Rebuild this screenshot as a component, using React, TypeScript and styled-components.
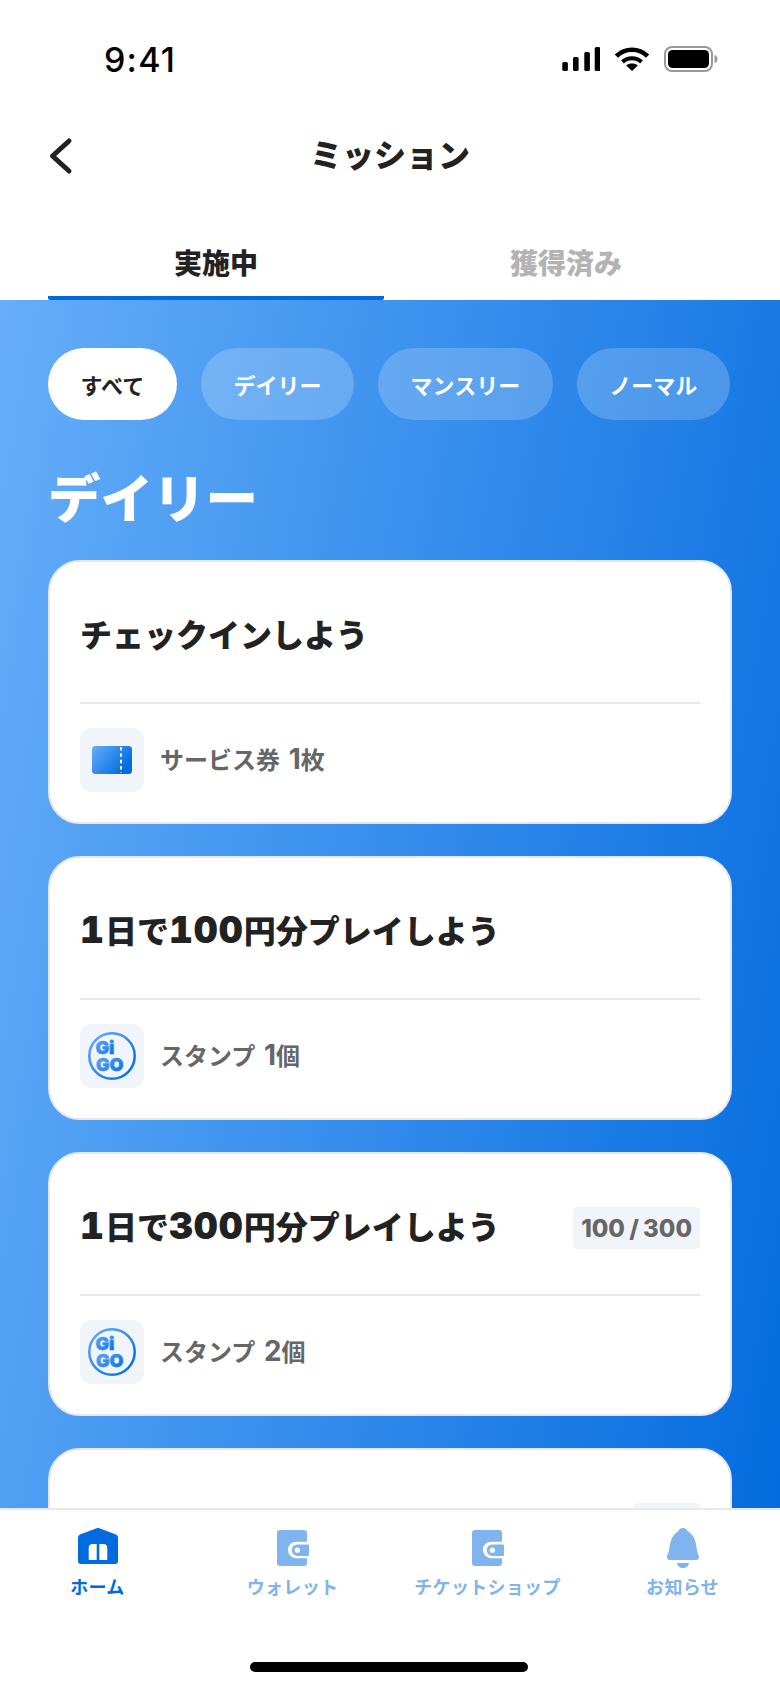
import { createGlobalStyle, styled } from 'styled-components'

const GlobalStyle = createGlobalStyle`
  html, body {
    margin: 0;
    padding: 0;
    background: #fff;
  }
  * {
    box-sizing: border-box;
  }
`

const FONT = `Inter, "Noto Sans CJK JP", sans-serif`

const Page = styled.div`
  width: 780px;
  height: 1688px;
  display: flex;
  flex-direction: column;
  overflow: hidden;
  background: #fff;
  color: #222;
  font-family: ${FONT};
`

const StatusBar = styled.div`
  height: 118px;
  flex: none;
  display: flex;
  align-items: center;
  justify-content: space-between;
  padding: 0 62px 0 104px;
`

const Time = styled.span`
  font-size: 34px;
  font-weight: 500;
  letter-spacing: 1.2px;
  color: #000;
`

const StatusIcons = styled.div`
  display: flex;
  align-items: center;
  gap: 15px;
`

const Header = styled.header`
  height: 76px;
  flex: none;
  display: grid;
  grid-template-columns: 1fr auto 1fr;
  align-items: center;
  padding: 0 48px;
`

const BackButton = styled.button`
  width: 28px;
  height: 40px;
  padding: 0;
  border: 0;
  background: none;
  display: flex;
  align-items: center;
`

const Title = styled.h1`
  margin: 0;
  font-size: 32px;
  font-weight: 900;
  line-height: 40px;
`

const Tabs = styled.div`
  margin-top: 34px;
  height: 72px;
  flex: none;
  display: grid;
  grid-template-columns: 336px 336px;
  gap: 14px;
  padding: 0 48px;
`

const Tab = styled.div<{ $active?: boolean }>`
  display: flex;
  align-items: center;
  justify-content: center;
  font-size: 28px;
  font-weight: 900;
  color: ${p => (p.$active ? '#222' : '#b3b3b3')};
  border-bottom: 4px solid ${p => (p.$active ? '#006bdf' : 'transparent')};
  border-radius: 0 0 2px 2px;
`

const Main = styled.main`
  flex: 1;
  min-height: 0;
  overflow: hidden;
  padding: 48px 48px 0;
  background: linear-gradient(100deg, #66aef9 0%, #046cdf 100%);
`

const Chips = styled.div`
  display: flex;
  gap: 24px;
`

const Chip = styled.div<{ $active?: boolean }>`
  height: 72px;
  flex: none;
  padding: 0 32.6px;
  border-radius: 36px;
  display: flex;
  align-items: center;
  white-space: nowrap;
  font-size: 22px;
  font-weight: 700;
  color: ${p => (p.$active ? '#222' : '#fff')};
  background: ${p => (p.$active ? '#fff' : 'rgba(255, 255, 255, 0.2)')};
`

const SectionTitle = styled.h2`
  margin: 41px 0 23px;
  font-size: 52.5px;
  font-weight: 900;
  line-height: 76px;
  color: #fff;
`

const CardList = styled.div`
  display: flex;
  flex-direction: column;
  gap: 32px;
`

const Card = styled.section`
  height: 264px;
  flex: none;
  padding: 30px;
  background: #fff;
  border: 2px solid #e8e8e8;
  border-radius: 32px;
`

const CardTop = styled.div`
  height: 88px;
  display: flex;
  align-items: center;
  justify-content: space-between;
`

// digits sit larger than the kana around them
const Num = styled.span`
  font-size: 1.16em;
  line-height: 1;
`

const CardTitle = styled.h3`
  margin: 0 0 6px;
  font-size: 32px;
  font-weight: 900;
  color: #222;

  ${Num} {
    font-variant-numeric: tabular-nums;
    letter-spacing: 1px;
  }
`

const Progress = styled.span`
  min-width: 66px;
  height: 42px;
  padding: 0 8px;
  display: flex;
  align-items: center;
  border-radius: 4px;
  background: #f1f5f9;
  font-size: 24px;
  font-weight: 800;
  word-spacing: -1px;
  color: #666;
`

const Divider = styled.hr`
  margin: 22px 0 24px;
  height: 2px;
  border: 0;
  background: #e8e8e8;
`

const Reward = styled.div`
  display: flex;
  align-items: center;
  gap: 16px;
`

const RewardIcon = styled.div`
  width: 64px;
  height: 64px;
  flex: none;
  display: flex;
  align-items: center;
  justify-content: center;
  border-radius: 12px;
  background: #f1f5f9;
`

const RewardLabel = styled.span`
  margin-bottom: 4px;
  font-size: 24px;
  font-weight: 700;
  word-spacing: 3px;
  color: #666;
`

const BottomNav = styled.nav`
  height: 180px;
  flex: none;
  position: relative;
  display: grid;
  grid-template-columns: repeat(4, 1fr);
  align-items: start;
  padding-top: 18px;
  background: #fff;
  border-top: 2px solid #e8e8e8;
`

const NavItem = styled.div<{ $active?: boolean }>`
  display: flex;
  flex-direction: column;
  align-items: center;
  font-size: 18px;
  font-weight: 700;
  line-height: 26px;
  letter-spacing: 0.3px;
  color: ${p => (p.$active ? '#006bdf' : '#80b4ef')};
`

const NavIconSlot = styled.div`
  height: 40px;
  margin-bottom: 7px;
  display: flex;
  align-items: center;
  justify-content: center;
`

const HomeIndicator = styled.div`
  position: absolute;
  left: 250px;
  bottom: 16px;
  width: 278px;
  height: 10px;
  border-radius: 5px;
  background: #000;
`

const SignalIcon = () => (
  <svg width="38" height="24" viewBox="0 0 38 24" fill="#000">
    <rect x="0.3" y="15" width="5.6" height="9" rx="1.6" />
    <rect x="11" y="10" width="5.6" height="14" rx="1.6" />
    <rect x="22.3" y="5" width="5.6" height="19" rx="1.6" />
    <rect x="32.7" y="0" width="5.6" height="24" rx="1.6" />
  </svg>
)

const WifiIcon = () => (
  <svg width="34" height="24" viewBox="0 0 34 24">
    <path d="M1.4 9.2C10 .6 24 .6 32.6 9.2" fill="none" stroke="#000" strokeWidth="4.6" />
    <path d="M7.5 14.9C12.8 10 21.2 10 26.5 14.9" fill="none" stroke="#000" strokeWidth="4.2" />
    <path d="M17 24L11.2 18.4C14.5 15.8 19.5 15.8 22.8 18.4Z" fill="#000" />
  </svg>
)

const BatteryIcon = () => (
  <svg width="54" height="26" viewBox="0 0 54 26">
    <rect x="1" y="1" width="47" height="24" rx="7" fill="none" stroke="#999" strokeWidth="2" />
    <rect x="4" y="4" width="41" height="18" rx="4.5" fill="#000" />
    <path d="M50.5 9C52.5 9.6 53.5 11 53.5 13S52.5 16.4 50.5 17Z" fill="#999" />
  </svg>
)

const BackIcon = () => (
  <svg width="26" height="38" viewBox="0 0 26 38">
    <path d="M21 4L4.500 19L21 34" fill="none" stroke="#222" strokeWidth="5" strokeLinecap="round" strokeLinejoin="round" />
  </svg>
)

const TicketIcon = () => (
  <svg width="40" height="28" viewBox="0 0 40 28">
    <defs>
      <linearGradient id="ticket" x1="0" y1="0" x2="1" y2="0.6">
        <stop offset="0" stopColor="#66aef9" />
        <stop offset="1" stopColor="#006bdf" />
      </linearGradient>
    </defs>
    <rect width="40" height="28" rx="3.5" fill="url(#ticket)" />
    <path d="M29 1V27" stroke="#fff" strokeWidth="2" strokeDasharray="3.4 3" />
  </svg>
)

const GigoIcon = ({ id }: { id: string }) => (
  <svg width="48" height="48" viewBox="0 0 48 48">
    <defs>
      <linearGradient id={id} x1="0" y1="0" x2="1" y2="1">
        <stop offset="0" stopColor="#66aef9" />
        <stop offset="1" stopColor="#006bdf" />
      </linearGradient>
    </defs>
    <circle cx="24" cy="24" r="22.7" fill="none" stroke={`url(#${id})`} strokeWidth="2.6" />
    <text x="7.5" y="22" fontFamily="Inter, sans-serif" fontSize="18" fontWeight="900" stroke={`url(#${id})`} strokeWidth="0.5" fill={`url(#${id})`}>Gi</text>
    <text x="8" y="38.5" fontFamily="Inter, sans-serif" fontSize="18" fontWeight="900" stroke={`url(#${id})`} strokeWidth="0.5" fill={`url(#${id})`}>GO</text>
  </svg>
)

const HomeIcon = () => (
  <svg width="40" height="40" viewBox="0 0 40 40" fill="#006bdf">
    <path
      fillRule="evenodd"
      d="M18.6.3Q20-.2 21.4.3L38 6.6Q40 7.4 40 9.5V33Q40 36 37 36H3Q0 36 0 33V9.5Q0 7.4 2 6.6ZM10.7 32H18.7V16H14.7Q10.7 16 10.7 20ZM21.3 32H29.3V20Q29.3 16 25.3 16H21.3Z"
    />
  </svg>
)

const WalletIcon = () => (
  <svg width="32" height="36" viewBox="0 0 32 36">
    <rect width="30" height="36" rx="3" fill="#80b4ef" />
    <path d="M30 11.7H19.2A8.2 8.2 0 0 0 19.2 28.2H30Z" fill="#fff" />
    <path d="M20.5 14.4H31A1 1 0 0 1 32 15.4V25A1 1 0 0 1 31 26H20.5A5.8 5.8 0 0 1 20.5 14.4Z" fill="#80b4ef" />
    <circle cx="20.3" cy="20.2" r="2.6" fill="#fff" />
  </svg>
)

const BellIcon = () => (
  <svg width="32" height="40" viewBox="0 0 32 40" fill="#80b4ef">
    <path d="M16 0C18.5 0 20.5 1.6 20.8 3.6C26 5.8 28.8 12.5 29.8 21C30.3 25.5 32 27 32 29C32 31 31 32 29 32H3C1 32 0 31 0 29C0 27 1.7 25.5 2.2 21C3.2 12.5 6 5.8 11.2 3.6C11.5 1.6 13.5 0 16 0Z" />
    <path d="M10 35H22C21.5 38 19 40 16 40S10.5 38 10 35Z" />
  </svg>
)

const withNums = (text: string) =>
  text.split(/(\d+)/).map((part, i) => (i % 2 ? <Num key={i}>{part}</Num> : part))

interface Mission {
  title: string
  progress?: string
  reward?: string
  icon?: 'ticket' | 'stamp'
}

// the last card is cut off by the nav, only its top edge and pill show
const missions: Mission[] = [
  { title: 'チェックインしよう', reward: 'サービス券 1枚', icon: 'ticket' },
  { title: '1日で100円分プレイしよう', reward: 'スタンプ 1個', icon: 'stamp' },
  { title: '1日で300円分プレイしよう', progress: '100 / 300', reward: 'スタンプ 2個', icon: 'stamp' },
  { title: '', progress: '' },
]

const filters = ['すべて', 'デイリー', 'マンスリー', 'ノーマル']

export default function App() {
  return (
    <Page>
      <GlobalStyle />
      <StatusBar>
        <Time>9:41</Time>
        <StatusIcons>
          <SignalIcon />
          <WifiIcon />
          <BatteryIcon />
        </StatusIcons>
      </StatusBar>
      <Header>
        <BackButton aria-label="戻る">
          <BackIcon />
        </BackButton>
        <Title>ミッション</Title>
      </Header>
      <Tabs>
        <Tab $active>実施中</Tab>
        <Tab>獲得済み</Tab>
      </Tabs>
      <Main>
        <Chips>
          {filters.map((f, i) => (
            <Chip key={f} $active={i === 0}>{f}</Chip>
          ))}
        </Chips>
        <SectionTitle>デイリー</SectionTitle>
        <CardList>
          {missions.map((m, i) => (
            <Card key={i}>
              <CardTop>
                <CardTitle>{withNums(m.title)}</CardTitle>
                {m.progress !== undefined && <Progress>{m.progress}</Progress>}
              </CardTop>
              <Divider />
              {m.reward && (
                <Reward>
                  <RewardIcon>
                    {m.icon === 'ticket' ? <TicketIcon /> : <GigoIcon id={`gigo-${i}`} />}
                  </RewardIcon>
                  <RewardLabel>{withNums(m.reward)}</RewardLabel>
                </Reward>
              )}
            </Card>
          ))}
        </CardList>
      </Main>
      <BottomNav>
        <NavItem $active>
          <NavIconSlot><HomeIcon /></NavIconSlot>
          ホーム
        </NavItem>
        <NavItem>
          <NavIconSlot><WalletIcon /></NavIconSlot>
          ウォレット
        </NavItem>
        <NavItem>
          <NavIconSlot><WalletIcon /></NavIconSlot>
          チケットショップ
        </NavItem>
        <NavItem>
          <NavIconSlot><BellIcon /></NavIconSlot>
          お知らせ
        </NavItem>
        <HomeIndicator />
      </BottomNav>
    </Page>
  )
}
